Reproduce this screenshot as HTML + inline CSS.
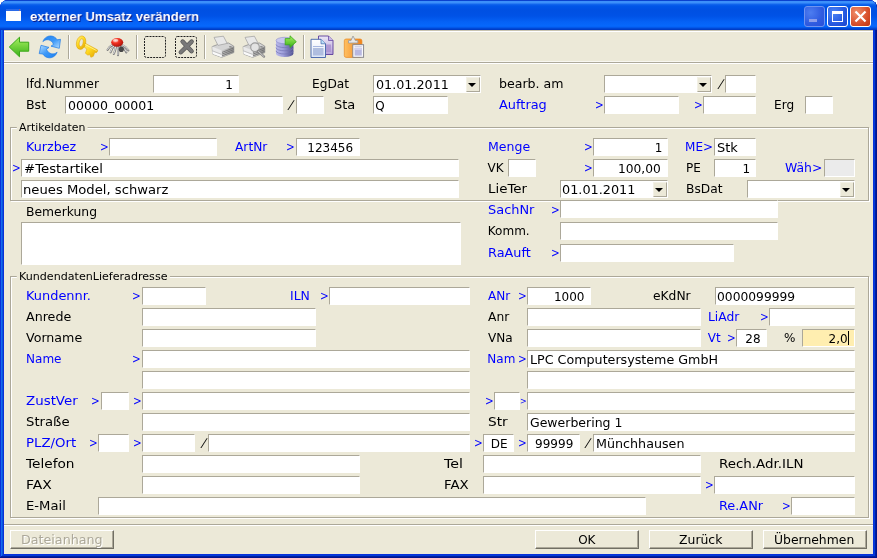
<!DOCTYPE html>
<html lang="de"><head><meta charset="utf-8"><title>externer Umsatz verändern</title>
<style>
html,body{margin:0;padding:0}
body{width:877px;height:558px;position:relative;overflow:hidden;background:#fff;font:12px "DejaVu Sans","Liberation Sans",sans-serif;color:#000}
#win{position:absolute;left:0;top:0;width:877px;height:558px;background:#0831d9;border-radius:8px 8px 0 0;overflow:hidden;box-shadow:inset -1px -1px #00138c,inset 1px 1px #0831d9,inset -2px -2px #001ea0,inset 2px 2px #166aee,inset -3px -3px #003bda,inset 3px 3px #0855dd}
#tb{position:absolute;left:0;top:0;width:877px;height:30px;border-radius:8px 8px 0 0;background:linear-gradient(180deg,#0a42cf 0,#0a42cf 1px,#3c90fa 1px,#3c90fa 3px,#1468ee 4px,#0056e8 6px,#0050e2 10px,#0052e6 16px,#0562f6 22px,#0668fc 26px,#0460f4 27px,#0048d6 28.5px,#0036be 30px)}
#tt{position:absolute;left:29.5px;top:9px;font:bold 13.5px/16px "Liberation Sans","DejaVu Sans",sans-serif;color:#fff;text-shadow:1px 1px 0 #0a1883;white-space:nowrap;transform-origin:0 0;transform:scaleX(0.972)}
#ico{position:absolute;left:6px;top:9px;width:15px;height:12px}
#client{position:absolute;left:4px;top:30px;width:869px;height:524px;background:#ece9d8}
#tsep{position:absolute;left:4px;top:62px;width:869px;height:1px;background:#aca899;box-shadow:0 -1px 0 #f8f7f1}
#tsep2{position:absolute;left:4px;top:63px;width:869px;height:1px;background:#fff}
#bsep{position:absolute;left:4px;top:524px;width:869px;height:1px;background:#aca899}
#bsep2{position:absolute;left:4px;top:525px;width:869px;height:1px;background:#fff}
#layer{position:absolute;left:0;top:0;width:877px;height:558px;will-change:transform}
#tt{will-change:transform}
.t{position:absolute;white-space:nowrap;font-size:12px;line-height:14px;transform-origin:0 0;display:block}
.b{color:#0000ff;-webkit-text-stroke:0}
.gl:before{content:"";position:absolute;left:-2px;right:-2px;top:0;bottom:0;background:#ece9d8;z-index:-1}
.bdt{color:#aca899;text-shadow:1px 1px 0 #fff}
.caret{position:absolute;width:1px;height:14px;background:#000}
.i{position:absolute;box-sizing:border-box;background:#fff;border:1px solid #fff;border-top-color:#aca899;border-left-color:#aca899}
.i.dis{background:#ebebeb}
.i.foc{background:#ffeeb0}
.i.c i{position:absolute;right:0;top:1px;width:14px;height:15px;background:#ece9d8;border:1px solid #aca899;border-left-color:#f3f1e6;border-top-color:#f3f1e6;box-sizing:border-box}
.i.c i:after{content:"";position:absolute;left:2px;top:5px;border:4px solid transparent;border-top:4px solid #000;border-bottom:0;width:0;height:0;margin-left:-1px}
.g{position:absolute;box-sizing:border-box;border:1px solid #aca899;box-shadow:1px 1px 0 #fff, inset 1px 1px 0 #fff}
.btn{position:absolute;box-sizing:border-box;background:#ece9d8;border:1px solid;border-color:#fff #716f64 #716f64 #fff;box-shadow:inset -1px -1px 0 #aca899;text-align:center;line-height:17px;white-space:nowrap}
.cb{position:absolute;top:6px;width:21px;height:21px;border-radius:3px;box-sizing:border-box;border:1px solid #fff}
#bmin{left:804px;background:radial-gradient(circle at 30% 30%,#4d7df0,#2f5be0 60%,#2a4fd8);border-color:#6f93f0}
#bmin b{position:absolute;left:4px;top:12px;width:8px;height:3px;background:#8d9eea}
#bmax{left:827px;background:radial-gradient(circle at 30% 30%,#4d85f5,#2558e0 60%,#1c44cc)}
#bmax b{position:absolute;left:4px;top:4px;width:11px;height:11px;box-sizing:border-box;border:1px solid #fff;border-top-width:3px}
#bcls{left:850px;background:radial-gradient(circle at 30% 30%,#f0906c,#d8502c 60%,#c03410)}
#bcls svg{position:absolute;left:0;top:0}
#tools{position:absolute;left:0;top:0}
#thl{position:absolute;left:4px;top:30px;width:869px;height:1px;background:#c8c4b2;box-shadow:0 1px 0 #fff}
</style></head><body>
<div id="win">
<div id="tb"></div>
<svg id="ico" viewBox="0 0 15 12"><rect x="0" y="0" width="15" height="12" fill="#fff"/><rect x="0" y="0" width="15" height="2" fill="#2a6ae8"/><rect x="13" y="0.5" width="1" height="1" fill="#e06030"/></svg>
<div id="tt">externer Umsatz verändern</div>
<div class="cb" id="bmin"><b></b></div>
<div class="cb" id="bmax"><b></b></div>
<div class="cb" id="bcls"><svg width="19" height="19" viewBox="0 0 19 19"><path d="M4.5 4.5 L14.5 14.5 M14.5 4.5 L4.5 14.5" stroke="#fff" stroke-width="2.2" stroke-linecap="butt"/></svg></div>
<div id="client"></div>
<div id="thl"></div>
<div id="tsep"></div><div id="tsep2"></div>
<div id="bsep"></div><div id="bsep2"></div>
<svg id="tools" width="877" height="66" viewBox="0 0 877 66">
<defs>
<linearGradient id="gG" x1="0" y1="0" x2="0" y2="1"><stop offset="0" stop-color="#a8f060"/><stop offset="1" stop-color="#38b018"/></linearGradient>
<linearGradient id="gB1" x1="0" y1="0" x2="1" y2="1"><stop offset="0" stop-color="#1c80f0"/><stop offset="0.5" stop-color="#3c98f8"/><stop offset="1" stop-color="#b8e0ff"/></linearGradient><linearGradient id="gB2" x1="1" y1="1" x2="0" y2="0"><stop offset="0" stop-color="#1c80f0"/><stop offset="0.5" stop-color="#3c98f8"/><stop offset="1" stop-color="#b8e0ff"/></linearGradient>
<linearGradient id="gK" x1="0" y1="0" x2="1" y2="1"><stop offset="0" stop-color="#fff080"/><stop offset="0.45" stop-color="#ffd820"/><stop offset="1" stop-color="#e0a000"/></linearGradient>
<radialGradient id="gR" cx="0.35" cy="0.3" r="0.8"><stop offset="0" stop-color="#ffb0a0"/><stop offset="0.4" stop-color="#f03020"/><stop offset="1" stop-color="#a01008"/></radialGradient>
<linearGradient id="gP2" x1="0" y1="0" x2="1" y2="0"><stop offset="0" stop-color="#cfcfcf"/><stop offset="1" stop-color="#8e8e8e"/></linearGradient>
<linearGradient id="gD" x1="0" y1="0" x2="1" y2="0"><stop offset="0" stop-color="#b8b8e8"/><stop offset="0.4" stop-color="#a0a0dc"/><stop offset="1" stop-color="#505090"/></linearGradient>
<linearGradient id="gO" x1="0" y1="0" x2="1" y2="0"><stop offset="0" stop-color="#ffc060"/><stop offset="1" stop-color="#f08018"/></linearGradient>
<linearGradient id="gC1" x1="0" y1="0" x2="0" y2="1"><stop offset="0" stop-color="#ffffff"/><stop offset="1" stop-color="#dce6f6"/></linearGradient>
<linearGradient id="gC2" x1="0" y1="0" x2="0" y2="1"><stop offset="0" stop-color="#ece8f6"/><stop offset="1" stop-color="#b4a0d8"/></linearGradient>
</defs>
<!-- back arrow -->
<path d="M9.3 47 L19.5 37.2 L19.5 42.2 L28.7 42.2 L28.7 51.2 L19.5 51.2 L19.5 56.8 Z" fill="url(#gG)" stroke="#3aa818" stroke-width="1" stroke-linejoin="round"/>
<!-- refresh -->
<path d="M42.9 41.6 C44.3 37.6 47.8 35.8 51 36 C53.6 36.2 55.8 37.6 57.2 39.8 L60.5 39.3 L59.3 48.3 L51 46.2 L53.5 44.3 C52.6 41.8 50.6 40.3 48.5 39.8 C46.3 39.4 44.5 40.2 42.9 41.6 Z" fill="url(#gB1)" stroke="#1c7ae6" stroke-width="0.7" stroke-linejoin="round"/>
<path d="M57.1 52.2 C55.7 56.2 52.2 58 49 57.8 C46.4 57.6 44.2 56.2 42.8 54 L39.2 53.6 L41 45.3 L49 47.4 L46.5 49.3 C47.4 51.8 49.4 53.3 51.5 53.8 C53.7 54.2 55.5 53.6 57.1 52.2 Z" fill="url(#gB2)" stroke="#1c7ae6" stroke-width="0.7" stroke-linejoin="round"/>
<!-- key -->
<g stroke="#dca000" stroke-width="0.5" stroke-linejoin="round">
<path d="M84.6 42.9 L97.4 49.8 L97.7 51 L96.4 52.7 L94.8 52.3 L93.3 56.3 L90.9 57.3 L89.5 54.2 L88 55.3 L85.4 53.2 L86.8 49.2 L83.4 46.2 Z" fill="url(#gK)"/>
<path fill-rule="evenodd" transform="rotate(13 81.1 42.7)" d="M81.1 35.9 C83.8 35.9 85.7 39 85.7 42.7 C85.7 46.4 83.8 49.5 81.1 49.5 C78.4 49.5 76.5 46.4 76.5 42.7 C76.5 39 78.4 35.9 81.1 35.9 Z M81.2 38.7 C80 38.7 79.3 40.6 79.3 42.7 C79.3 44.8 80 46.7 81.2 46.7 C82.4 46.7 83.1 44.8 83.1 42.7 C83.1 40.6 82.4 38.7 81.2 38.7 Z" fill="url(#gK)"/>
<path d="M85 44.4 L96.6 50.6" fill="none" stroke="#fff6a0" stroke-width="0.8"/>
</g>
<!-- bug -->
<g fill="none" stroke="#7e7e7e" stroke-width="2.1" stroke-linecap="round">
<path d="M113.5 44.5 L109.6 47 L107.6 49.8"/>
<path d="M114.5 45.5 L112 49 L110.6 52.4"/>
<path d="M116 46.5 L115 50.6 L113.8 54"/>
<path d="M118 46.8 L118.2 51.6 L118 55.2"/>
<path d="M121 44.5 L125.6 47.2 L128.4 50.4"/>
<path d="M120.6 45.6 L124.4 49 L126.4 52.4"/>
</g>
<g fill="none" stroke="#ececec" stroke-width="0.9" stroke-linecap="round">
<path d="M113.3 44.3 L109.4 46.8 L107.6 49.4"/>
<path d="M114.3 45.3 L111.8 48.8 L110.5 52"/>
<path d="M115.8 46.3 L114.8 50.4 L113.7 53.6"/>
<path d="M117.8 46.6 L118 51.4 L117.9 54.8"/>
<path d="M121.2 44.3 L125.8 47 L128.4 50"/>
<path d="M120.8 45.4 L124.6 48.8 L126.5 52"/>
</g>
<ellipse cx="121.3" cy="49.2" rx="2.6" ry="2.8" fill="#484848"/>
<ellipse cx="117.2" cy="42.3" rx="6" ry="4.4" fill="url(#gR)"/>
<ellipse cx="115.6" cy="40.4" rx="2.6" ry="1.3" fill="#fff" fill-opacity="0.55"/>
<!-- dashed squares -->
<rect x="144.5" y="36.5" width="21" height="21" rx="2" fill="none" stroke="#202020" stroke-width="1" stroke-dasharray="2 1"/>
<rect x="175.5" y="36.5" width="21" height="21" rx="2" fill="none" stroke="#202020" stroke-width="1" stroke-dasharray="2 1"/>
<path d="M182.6 41.6 L191.6 51.2 M191.6 41.6 L180.8 52.2" stroke="#505050" stroke-width="4.4" stroke-linecap="round"/><path d="M182.6 41.6 L191.6 51.2 M191.6 41.6 L180.8 52.2" stroke="#787878" stroke-width="3.2" stroke-linecap="round"/>
<!-- printer -->
<g>
<path d="M212.2 46.6 L218 44.4 L228.6 43 L233.8 46.2 L233.8 52.6 L221.6 57.3 L212.6 54 Z" fill="#d4d4d4" stroke="#969696" stroke-width="0.9" stroke-linejoin="round"/>
<path d="M221.6 50.6 L233.8 46.2 L233.8 52.6 L221.6 57.3 Z" fill="url(#gP2)"/>
<path d="M212.2 46.6 L221.6 50.6 L221.6 57.3 L212.6 54 Z" fill="#e9e9e9"/>
<path d="M212.5 51.4 L221.6 54.9 L221.6 57.1 L212.7 53.8 Z" fill="#fafafa"/>
<path d="M212.4 50.8 L221.6 54.4" fill="none" stroke="#b0b0b0" stroke-width="0.7"/>
<path d="M222 52.4 L233.6 48 M222 54.1 L233.6 49.7 M222 55.8 L233.6 51.4" fill="none" stroke="#6c6c6c" stroke-width="0.8"/>
<path d="M214 37.4 L223.4 36.2 L227.2 43.4 L218 45.4 Z" fill="#e8e8e8" stroke="#a4a4a4" stroke-width="0.8" stroke-linejoin="round"/>
<ellipse cx="230.4" cy="46.7" rx="1.5" ry="0.8" fill="#8c8c8c"/>
</g>
<g transform="translate(31 0)">
<path d="M212.2 46.6 L218 44.4 L228.6 43 L233.8 46.2 L233.8 52.6 L221.6 57.3 L212.6 54 Z" fill="#d4d4d4" stroke="#969696" stroke-width="0.9" stroke-linejoin="round"/>
<path d="M221.6 50.6 L233.8 46.2 L233.8 52.6 L221.6 57.3 Z" fill="url(#gP2)"/>
<path d="M212.2 46.6 L221.6 50.6 L221.6 57.3 L212.6 54 Z" fill="#e9e9e9"/>
<path d="M212.5 51.4 L221.6 54.9 L221.6 57.1 L212.7 53.8 Z" fill="#fafafa"/>
<path d="M212.4 50.8 L221.6 54.4" fill="none" stroke="#b0b0b0" stroke-width="0.7"/>
<path d="M222 52.4 L233.6 48 M222 54.1 L233.6 49.7 M222 55.8 L233.6 51.4" fill="none" stroke="#6c6c6c" stroke-width="0.8"/>
<path d="M214 37.4 L223.4 36.2 L227.2 43.4 L218 45.4 Z" fill="#e8e8e8" stroke="#a4a4a4" stroke-width="0.8" stroke-linejoin="round"/>
<ellipse cx="230.4" cy="46.7" rx="1.5" ry="0.8" fill="#8c8c8c"/>
</g>
<circle cx="255" cy="47.2" r="4.3" fill="#e4e4e4" fill-opacity="0.9" stroke="#9a9a9a" stroke-width="1.1"/>
<path d="M258 51 L264 56.6" stroke="#8c8c8c" stroke-width="2.4" stroke-linecap="round"/>
<path d="M258.5 51.5 L263.6 56.2" stroke="#d8d8d8" stroke-width="0.8" stroke-linecap="round"/>
<!-- database -->
<path d="M276 40.5 L276 53.8 A8.7 3.2 0 0 0 293.4 53.8 L293.4 40.5 Z" fill="url(#gD)"/>
<ellipse cx="284.7" cy="40.5" rx="8.7" ry="3.2" fill="#c8c8f0" stroke="#8080c0" stroke-width="0.5"/>
<path d="M276 44.4 A8.7 3.2 0 0 0 293.4 44.4 M276 47.6 A8.7 3.2 0 0 0 293.4 47.6 M276 50.8 A8.7 3.2 0 0 0 293.4 50.8" fill="none" stroke="#7474b4" stroke-width="0.7"/>
<path d="M285.2 38.6 L290 38.6 L290 35.8 L296.3 41.7 L290 47.5 L290 44.8 L285.2 44.8 Z" fill="url(#gG)" stroke="#38a818" stroke-width="0.8" stroke-linejoin="round"/>
<!-- copy -->
<path d="M318.5 36 L328.5 36 L333 40.5 L333 54.5 L318.5 54.5 Z" fill="url(#gC2)" stroke="#5c3c9c" stroke-width="0.9"/>
<path d="M328.5 36 L328.5 40.5 L333 40.5" fill="#c8b8e8" stroke="#5c3c9c" stroke-width="0.7"/>
<rect x="326" y="44.5" width="5" height="7.5" fill="#a890d0" fill-opacity="0.8"/>
<path d="M311 39.3 L321 39.3 L325.5 43.8 L325.5 57.5 L311 57.5 Z" fill="url(#gC1)" stroke="#4060a8" stroke-width="0.9"/>
<path d="M321 39.3 L321 43.8 L325.5 43.8" fill="#b8e0f8" stroke="#4060a8" stroke-width="0.7"/>
<rect x="313" y="48" width="10.5" height="7.5" fill="#a8b8dc" fill-opacity="0.9"/>
<rect x="313" y="46" width="10.5" height="1" fill="#a8b8e0"/>
<!-- paste -->
<rect x="344.3" y="39" width="17.6" height="18.4" rx="1.8" fill="url(#gO)" stroke="#e88820" stroke-width="0.7"/>
<path d="M348.5 43 L348.5 40.6 L351 40.6 L353 36 L355.4 40.6 L357.8 40.6 L357.8 43 Z" fill="#e8e8e8" stroke="#989898" stroke-width="0.8" stroke-linejoin="round"/>
<rect x="352.8" y="44.7" width="10.8" height="12.6" fill="#f8f8fc" stroke="#808088" stroke-width="0.9"/>
<rect x="354.6" y="48" width="7.2" height="7.6" fill="#b8b8e0"/><rect x="354.6" y="48" width="7.2" height="2" fill="#d0d0ec"/>
<rect x="354.6" y="46.4" width="7.2" height="0.9" fill="#b8b8d8"/>
<!-- separators -->
<g>
<rect x="68" y="35" width="1" height="24" fill="#aca899"/><rect x="69" y="35" width="1" height="24" fill="#fff"/>
<rect x="136" y="35" width="1" height="24" fill="#aca899"/><rect x="137" y="35" width="1" height="24" fill="#fff"/>
<rect x="204" y="35" width="1" height="24" fill="#aca899"/><rect x="205" y="35" width="1" height="24" fill="#fff"/>
<rect x="303" y="35" width="1" height="24" fill="#aca899"/><rect x="304" y="35" width="1" height="24" fill="#fff"/>
</g>
</svg>
<div id="layer">
<span class="t" style="left:25.50px;top:77px;transform:scaleX(1.0233);">lfd.Nummer</span>
<div class="i " style="left:153px;top:75px;width:86px;height:18px"></div>
<span class="t" style="left:225.19px;top:78px;transform:scaleX(1.0000);">1</span>
<span class="t" style="left:312.20px;top:77px;transform:scaleX(1.0170);">EgDat</span>
<div class="i c" style="left:373px;top:75px;width:108px;height:18px"><i></i></div>
<span class="t" style="left:375.50px;top:78px;transform:scaleX(1.0611);">01.01.2011</span>
<span class="t" style="left:499.30px;top:77px;transform:scaleX(1.0478);">bearb. am</span>
<div class="i c" style="left:604px;top:75px;width:108px;height:18px"><i></i></div>
<span class="t" style="left:718.76px;top:77px;transform-origin:50% 50%;transform:skewX(-18deg);">/</span>
<div class="i " style="left:725px;top:75px;width:31px;height:18px"></div>
<span class="t" style="left:25.50px;top:98px;transform:scaleX(1.0469);">Bst</span>
<div class="i " style="left:65px;top:96px;width:218px;height:18px"></div>
<span class="t" style="left:67.80px;top:99px;transform:scaleX(1.0464);">00000_00001</span>
<span class="t" style="left:289.23px;top:98px;transform-origin:50% 50%;transform:skewX(-18deg);">/</span>
<div class="i " style="left:296px;top:96px;width:28px;height:18px"></div>
<span class="t" style="left:334.30px;top:98px;transform:scaleX(1.0823);">Sta</span>
<div class="i " style="left:373px;top:96px;width:75px;height:18px"></div>
<span class="t" style="left:375.19px;top:99px;transform:scaleX(1.0000);">Q</span>
<span class="t b" style="left:499.30px;top:98px;transform:scaleX(1.0751);">Auftrag</span>
<span class="t b" style="left:594.53px;top:97px;transform:scaleX(0.8000);font-size:13px;line-height:15px;">&gt;</span>
<div class="i " style="left:604px;top:96px;width:75px;height:18px"></div>
<span class="t b" style="left:694.13px;top:97px;transform:scaleX(0.8000);font-size:13px;line-height:15px;">&gt;</span>
<div class="i " style="left:703px;top:96px;width:53px;height:18px"></div>
<span class="t" style="left:773.90px;top:98px;transform:scaleX(1.0090);">Erg</span>
<div class="i " style="left:805px;top:96px;width:28px;height:18px"></div>
<div class="g" style="left:10px;top:127px;width:859px;height:74px"></div>
<span class="t gl" style="left:19.20px;top:122px;transform:scaleX(1.0887);font-size:10px;line-height:11px;">Artikeldaten</span>
<span class="t b" style="left:25.50px;top:140px;transform:scaleX(1.0591);">Kurzbez</span>
<span class="t b" style="left:99.58px;top:139px;transform:scaleX(0.8000);font-size:13px;line-height:15px;">&gt;</span>
<div class="i " style="left:109px;top:138px;width:108px;height:18px"></div>
<span class="t b" style="left:235.40px;top:140px;transform:scaleX(1.0189);">ArtNr</span>
<span class="t b" style="left:286.48px;top:139px;transform:scaleX(0.8000);font-size:13px;line-height:15px;">&gt;</span>
<div class="i " style="left:296px;top:138px;width:64px;height:18px"></div>
<span class="t" style="left:307.33px;top:141px;transform:scaleX(1.0000);">123456</span>
<span class="t b" style="left:488.00px;top:140px;transform:scaleX(1.0441);">Menge</span>
<span class="t b" style="left:583.63px;top:139px;transform:scaleX(0.8000);font-size:13px;line-height:15px;">&gt;</span>
<div class="i " style="left:593px;top:138px;width:75px;height:18px"></div>
<span class="t" style="left:654.69px;top:141px;transform:scaleX(1.0000);">1</span>
<span class="t b" style="left:685.09px;top:140px;transform:scaleX(1.0000);">ME&gt;</span>
<div class="i " style="left:714px;top:138px;width:42px;height:18px"></div>
<span class="t" style="left:716.60px;top:141px;transform:scaleX(1.0800);">Stk</span>
<span class="t b" style="left:12.38px;top:160px;transform:scaleX(0.8000);font-size:13px;line-height:15px;">&gt;</span>
<div class="i " style="left:21px;top:159px;width:438px;height:18px"></div>
<span class="t" style="left:23.70px;top:162px;transform:scaleX(1.1069);">#Testartikel</span>
<span class="t" style="left:487.46px;top:161px;transform:scaleX(1.0000);">VK</span>
<div class="i " style="left:508px;top:159px;width:28px;height:18px"></div>
<span class="t b" style="left:583.63px;top:160px;transform:scaleX(0.8000);font-size:13px;line-height:15px;">&gt;</span>
<div class="i " style="left:593px;top:159px;width:75px;height:18px"></div>
<span class="t" style="left:618.40px;top:162px;transform:scaleX(1.0190);">100,00</span>
<span class="t" style="left:686.04px;top:161px;transform:scaleX(1.0000);">PE</span>
<div class="i " style="left:714px;top:159px;width:42px;height:18px"></div>
<span class="t" style="left:742.54px;top:162px;transform:scaleX(1.0000);">1</span>
<span class="t b" style="left:785.00px;top:161px;transform:scaleX(1.0354);">Wäh&gt;</span>
<div class="i dis" style="left:824px;top:159px;width:31px;height:18px"></div>
<div class="i " style="left:21px;top:180px;width:438px;height:18px"></div>
<span class="t" style="left:23.00px;top:183px;transform:scaleX(1.0970);">neues Model, schwarz</span>
<span class="t" style="left:488.00px;top:182px;transform:scaleX(1.1159);">LieTer</span>
<div class="i c" style="left:560px;top:180px;width:108px;height:18px"><i></i></div>
<span class="t" style="left:561.80px;top:183px;transform:scaleX(1.0684);">01.01.2011</span>
<span class="t" style="left:686.10px;top:182px;transform:scaleX(1.0179);">BsDat</span>
<div class="i c" style="left:747px;top:180px;width:108px;height:18px"><i></i></div>
<span class="t" style="left:25.50px;top:205px;transform:scaleX(1.0281);">Bemerkung</span>
<div class="i " style="left:21px;top:222px;width:440px;height:43px"></div>
<span class="t b" style="left:488.00px;top:203px;transform:scaleX(1.0779);">SachNr</span>
<span class="t b" style="left:550.83px;top:202px;transform:scaleX(0.8000);font-size:13px;line-height:15px;">&gt;</span>
<div class="i " style="left:560px;top:200px;width:218px;height:18px"></div>
<span class="t" style="left:487.84px;top:224px;transform:scaleX(1.0000);">Komm.</span>
<div class="i " style="left:560px;top:222px;width:218px;height:18px"></div>
<span class="t b" style="left:488.00px;top:246px;transform:scaleX(1.0686);">RaAuft</span>
<span class="t b" style="left:550.83px;top:245px;transform:scaleX(0.8000);font-size:13px;line-height:15px;">&gt;</span>
<div class="i " style="left:560px;top:244px;width:174px;height:18px"></div>
<div class="g" style="left:10px;top:276px;width:859px;height:242px"></div>
<span class="t gl" style="left:19.20px;top:271px;transform:scaleX(1.1095);font-size:10px;line-height:11px;">KundendatenLieferadresse</span>
<span class="t b" style="left:25.50px;top:289px;transform:scaleX(1.0769);">Kundennr.</span>
<span class="t b" style="left:132.48px;top:288px;transform:scaleX(0.8000);font-size:13px;line-height:15px;">&gt;</span>
<div class="i " style="left:142px;top:287px;width:64px;height:18px"></div>
<span class="t b" style="left:290.00px;top:289px;transform:scaleX(1.0365);">ILN</span>
<span class="t b" style="left:319.68px;top:288px;transform:scaleX(0.8000);font-size:13px;line-height:15px;">&gt;</span>
<div class="i " style="left:329px;top:287px;width:141px;height:18px"></div>
<span class="t b" style="left:488.00px;top:289px;transform:scaleX(1.0072);">ANr</span>
<span class="t b" style="left:517.63px;top:288px;transform:scaleX(0.8000);font-size:13px;line-height:15px;">&gt;</span>
<div class="i " style="left:527px;top:287px;width:64px;height:18px"></div>
<span class="t" style="left:553.93px;top:290px;transform:scaleX(1.0000);">1000</span>
<span class="t" style="left:653.00px;top:289px;transform:scaleX(1.0233);">eKdNr</span>
<div class="i " style="left:715px;top:287px;width:140px;height:18px"></div>
<span class="t" style="left:717.30px;top:290px;transform:scaleX(1.0238);">0000099999</span>
<span class="t" style="left:25.50px;top:310px;transform:scaleX(1.0551);">Anrede</span>
<div class="i " style="left:142px;top:308px;width:174px;height:18px"></div>
<span class="t" style="left:488.00px;top:310px;transform:scaleX(1.0231);">Anr</span>
<div class="i " style="left:527px;top:308px;width:174px;height:18px"></div>
<span class="t b" style="left:707.80px;top:310px;transform:scaleX(1.0261);">LiAdr</span>
<span class="t b" style="left:759.53px;top:309px;transform:scaleX(0.8000);font-size:13px;line-height:15px;">&gt;</span>
<div class="i " style="left:769px;top:308px;width:86px;height:18px"></div>
<span class="t" style="left:25.50px;top:331px;transform:scaleX(1.0524);">Vorname</span>
<div class="i " style="left:142px;top:329px;width:174px;height:18px"></div>
<span class="t" style="left:488.00px;top:331px;transform:scaleX(1.0065);">VNa</span>
<div class="i " style="left:527px;top:329px;width:174px;height:18px"></div>
<span class="t b" style="left:707.70px;top:331px;transform:scaleX(1.0000);">Vt</span>
<span class="t b" style="left:726.53px;top:330px;transform:scaleX(0.8000);font-size:13px;line-height:15px;">&gt;</span>
<div class="i " style="left:736px;top:329px;width:31px;height:18px"></div>
<span class="t" style="left:745.25px;top:332px;transform:scaleX(1.0000);">28</span>
<span class="t" style="left:784.10px;top:331px;transform:scaleX(1.0000);">%</span>
<div class="i foc" style="left:802px;top:329px;width:53px;height:18px"></div>
<span class="t" style="left:828.61px;top:332px;transform:scaleX(1.0000);">2,0</span>
<div class="caret" style="left:848px;top:331px"></div>
<span class="t b" style="left:25.50px;top:352px;transform:scaleX(1.0028);">Name</span>
<span class="t b" style="left:132.48px;top:351px;transform:scaleX(0.8000);font-size:13px;line-height:15px;">&gt;</span>
<div class="i " style="left:142px;top:350px;width:328px;height:18px"></div>
<span class="t b" style="left:487.34px;top:352px;transform:scaleX(1.0000);">Nam</span>
<span class="t b" style="left:517.73px;top:351px;transform:scaleX(0.8000);font-size:13px;line-height:15px;">&gt;</span>
<div class="i " style="left:527px;top:350px;width:328px;height:18px"></div>
<span class="t" style="left:529.60px;top:353px;transform:scaleX(1.0564);">LPC Computersysteme GmbH</span>
<div class="i " style="left:142px;top:371px;width:328px;height:18px"></div>
<div class="i " style="left:527px;top:371px;width:328px;height:18px"></div>
<span class="t b" style="left:25.50px;top:394px;transform:scaleX(1.1154);">ZustVer</span>
<span class="t b" style="left:91.43px;top:393px;transform:scaleX(0.8000);font-size:13px;line-height:15px;">&gt;</span>
<div class="i " style="left:101px;top:392px;width:28px;height:18px"></div>
<span class="t b" style="left:133.18px;top:393px;transform:scaleX(0.8000);font-size:13px;line-height:15px;">&gt;</span>
<div class="i " style="left:142px;top:392px;width:328px;height:18px"></div>
<span class="t b" style="left:485.13px;top:393px;transform:scaleX(0.8000);font-size:13px;line-height:15px;">&gt;</span>
<div class="i " style="left:494px;top:392px;width:26px;height:18px"></div>
<span class="t b" style="left:520.04px;top:397px;transform:scaleX(1.0000);font-size:8px;line-height:9px;">&gt;</span>
<div class="i " style="left:527px;top:392px;width:328px;height:18px"></div>
<span class="t" style="left:25.50px;top:415px;transform:scaleX(1.1002);">Straße</span>
<div class="i " style="left:142px;top:413px;width:328px;height:18px"></div>
<span class="t" style="left:488.00px;top:415px;transform:scaleX(1.1400);">Str</span>
<div class="i " style="left:527px;top:413px;width:328px;height:18px"></div>
<span class="t" style="left:530.00px;top:416px;transform:scaleX(1.0412);">Gewerbering 1</span>
<span class="t b" style="left:25.50px;top:436px;transform:scaleX(1.1082);">PLZ/Ort</span>
<span class="t b" style="left:88.53px;top:435px;transform:scaleX(0.8000);font-size:13px;line-height:15px;">&gt;</span>
<div class="i " style="left:98px;top:434px;width:31px;height:18px"></div>
<span class="t b" style="left:133.18px;top:435px;transform:scaleX(0.8000);font-size:13px;line-height:15px;">&gt;</span>
<div class="i " style="left:142px;top:434px;width:53px;height:18px"></div>
<span class="t" style="left:201.96px;top:436px;transform-origin:50% 50%;transform:skewX(-18deg);">/</span>
<div class="i " style="left:208px;top:434px;width:262px;height:18px"></div>
<span class="t b" style="left:474.48px;top:435px;transform:scaleX(0.8000);font-size:13px;line-height:15px;">&gt;</span>
<div class="i " style="left:483px;top:434px;width:31px;height:18px"></div>
<span class="t" style="left:490.85px;top:437px;transform:scaleX(1.0000);">DE</span>
<span class="t b" style="left:518.18px;top:435px;transform:scaleX(0.8000);font-size:13px;line-height:15px;">&gt;</span>
<div class="i " style="left:527px;top:434px;width:53px;height:18px"></div>
<span class="t" style="left:535.00px;top:437px;transform:scaleX(1.0037);">99999</span>
<span class="t" style="left:585.86px;top:436px;transform-origin:50% 50%;transform:skewX(-18deg);">/</span>
<div class="i " style="left:593px;top:434px;width:262px;height:18px"></div>
<span class="t" style="left:595.70px;top:437px;transform:scaleX(1.0589);">Münchhausen</span>
<span class="t" style="left:25.57px;top:457px;transform:scaleX(1.1385);">Telefon</span>
<div class="i " style="left:142px;top:455px;width:218px;height:18px"></div>
<span class="t" style="left:444.27px;top:457px;transform:scaleX(1.1816);">Tel</span>
<div class="i " style="left:483px;top:455px;width:218px;height:18px"></div>
<span class="t" style="left:718.80px;top:457px;transform:scaleX(1.1168);">Rech.Adr.ILN</span>
<span class="t" style="left:25.50px;top:478px;transform:scaleX(1.1590);">FAX</span>
<div class="i " style="left:142px;top:476px;width:218px;height:18px"></div>
<span class="t" style="left:444.20px;top:478px;transform:scaleX(1.1096);">FAX</span>
<div class="i " style="left:483px;top:476px;width:218px;height:18px"></div>
<span class="t b" style="left:704.98px;top:477px;transform:scaleX(0.8000);font-size:13px;line-height:15px;">&gt;</span>
<div class="i " style="left:714px;top:476px;width:141px;height:18px"></div>
<span class="t" style="left:25.50px;top:499px;transform:scaleX(1.0964);">E-Mail</span>
<div class="i " style="left:98px;top:497px;width:548px;height:18px"></div>
<span class="t b" style="left:718.80px;top:499px;transform:scaleX(1.0714);">Re.ANr</span>
<span class="t b" style="left:781.78px;top:498px;transform:scaleX(0.8000);font-size:13px;line-height:15px;">&gt;</span>
<div class="i " style="left:791px;top:497px;width:64px;height:18px"></div>
<div class="btn bd" style="left:10px;top:530px;width:104px;height:19px"></div>
<span class="t bdt" style="left:21.00px;top:533px;transform:scaleX(1.0575);">Dateianhang</span>
<div class="btn " style="left:535px;top:530px;width:104px;height:19px"></div>
<span class="t" style="left:578.16px;top:533px;transform:scaleX(1.0000);">OK</span>
<div class="btn " style="left:649px;top:530px;width:104px;height:19px"></div>
<span class="t" style="left:678.60px;top:533px;transform:scaleX(1.0348);">Zurück</span>
<div class="btn " style="left:763px;top:530px;width:104px;height:19px"></div>
<span class="t" style="left:774.40px;top:533px;transform:scaleX(1.0314);">Übernehmen</span>
</div>
</div>
</body></html>
